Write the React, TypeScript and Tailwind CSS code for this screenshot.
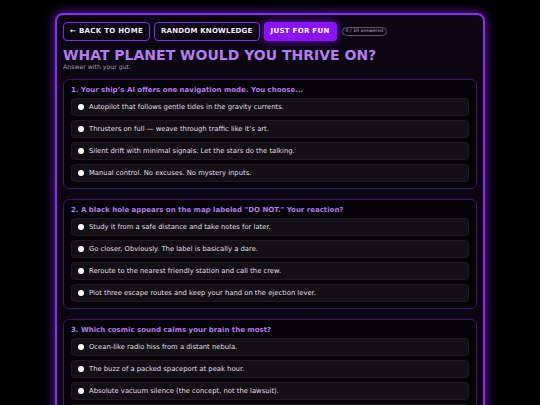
import React from "react";

type Question = { q: string; options: string[] };

const questions: Question[] = [
  {
    q: "1. Your ship’s AI offers one navigation mode. You choose...",
    options: [
      "Autopilot that follows gentle tides in the gravity currents.",
      "Thrusters on full — weave through traffic like it’s art.",
      "Silent drift with minimal signals. Let the stars do the talking.",
      "Manual control. No excuses. No mystery inputs.",
    ],
  },
  {
    q: "2. A black hole appears on the map labeled \"DO NOT.\" Your reaction?",
    options: [
      "Study it from a safe distance and take notes for later.",
      "Go closer. Obviously. The label is basically a dare.",
      "Reroute to the nearest friendly station and call the crew.",
      "Plot three escape routes and keep your hand on the ejection lever.",
    ],
  },
  {
    q: "3. Which cosmic sound calms your brain the most?",
    options: [
      "Ocean-like radio hiss from a distant nebula.",
      "The buzz of a packed spaceport at peak hour.",
      "Absolute vacuum silence (the concept, not the lawsuit).",
      "Deep engine hum through the hull at night.",
    ],
  },
];

export default function App() {
  return (
    <div
      className="min-h-screen bg-black pt-[13px] px-[55px] overflow-hidden"
      style={{ fontFamily: '"DejaVu Sans", Verdana, sans-serif' }}
    >
      <div className="rounded-[8px] border-2 border-[#8b2cf5] bg-[#0b0612] pt-[7px] px-[6px] pb-[10px] shadow-[0_0_12px_rgba(139,44,245,0.75)]">
        {/* nav */}
        <div className="flex items-center gap-[4px]">
          <button className="h-[19px] px-[6px] rounded-[4px] border border-[#7a2fe0] text-[7px] font-bold tracking-[0.3px] text-[#f1eaff] leading-none">
            ← BACK TO HOME
          </button>
          <button className="h-[19px] px-[6px] rounded-[4px] border border-[#7a2fe0] text-[7px] font-bold tracking-[0.2px] text-[#f1eaff] leading-none">
            RANDOM KNOWLEDGE
          </button>
          <button className="h-[19px] px-[7px] rounded-[4px] bg-[#8a12ff] text-[7px] font-bold tracking-[0.3px] text-white leading-none shadow-[0_0_8px_rgba(138,18,255,0.8)]">
            JUST FOR FUN
          </button>
          <span className="ml-[1px] h-[9px] px-[3px] flex items-center rounded-full border border-[#5d5468] text-[4.7px] text-[#b9b2c4] leading-none">
            0 / 10 answered
          </span>
        </div>

        <h1 className="mt-[6px] text-[14px] leading-[16px] font-bold text-[#b47cf0]">
          WHAT PLANET WOULD YOU THRIVE ON?
        </h1>
        <p className="text-[6.2px] leading-[8px] text-[#a39cae]">Answer with your gut.</p>

        <div className="mt-[8px] flex flex-col gap-[10px]">
          {questions.map((item) => (
            <div
              key={item.q}
              className="rounded-[6px] border border-[#3a1868] bg-[#060308] px-[7px] pt-[5px] pb-[6px]"
            >
              <div className="text-[7px] leading-[10px] font-bold text-[#b07ae8] mb-[3px]">
                {item.q}
              </div>
              <div className="flex flex-col gap-[4px]">
                {item.options.map((o) => (
                  <label
                    key={o}
                    className="h-[18px] flex items-center gap-[5px] pl-[6px] rounded-[4px] border border-[#1e1a24] bg-[#121016]"
                  >
                    <span className="w-[6px] h-[6px] rounded-full bg-white -mt-[1px]" />
                    <span className="text-[6.8px] text-[#e2dee8]">{o}</span>
                  </label>
                ))}
              </div>
            </div>
          ))}
        </div>
      </div>
    </div>
  );
}
